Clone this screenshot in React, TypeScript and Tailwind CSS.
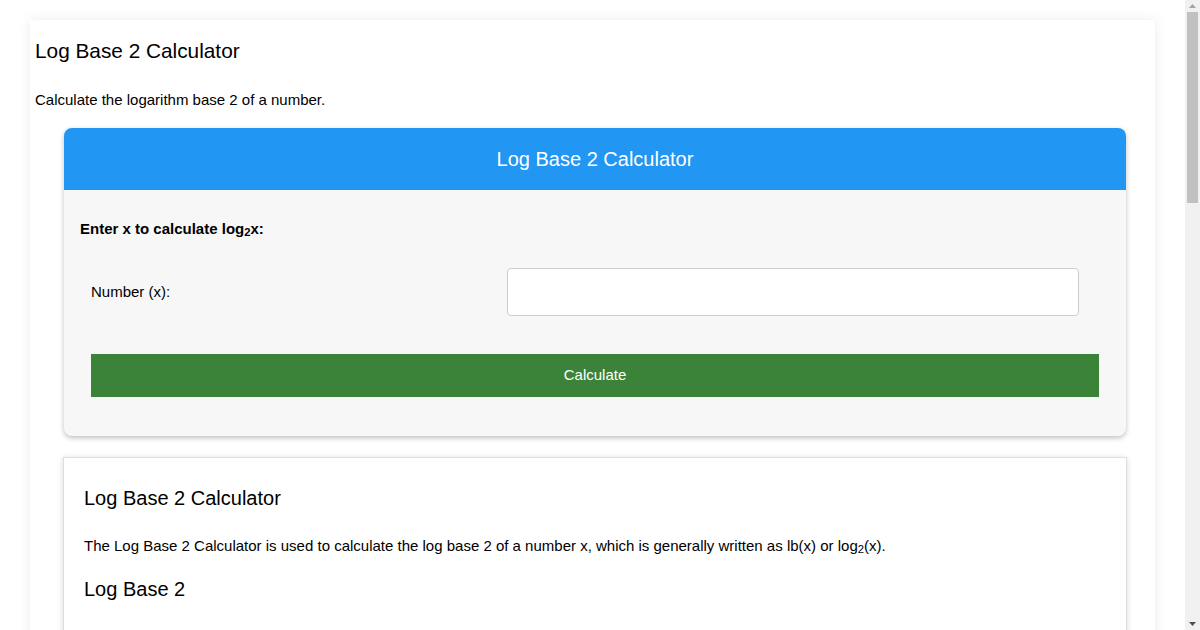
import React from "react";

function FakeScrollbar() {
  return (
    <div className="fixed top-0 right-0 w-[15px] h-screen bg-[#f1f1f1] flex flex-col items-center">
      <div className="h-[12px] w-full flex items-center justify-center">
        <svg width="7" height="4" viewBox="0 0 7 4"><path d="M0 4 L3.5 0 L7 4 Z" fill="#a3a3a3" /></svg>
      </div>
      <div className="w-[11px] h-[191px] bg-[#c1c1c1]" />
      <div className="flex-1" />
      <div className="h-[12px] w-full flex items-center justify-center">
        <svg width="7" height="4" viewBox="0 0 7 4"><path d="M0 0 L7 0 L3.5 4 Z" fill="#505050" /></svg>
      </div>
    </div>
  );
}

export default function App() {
  const font = { fontFamily: '"Liberation Sans", Arial, sans-serif' };
  return (
    <div className="bg-white text-black pt-[20px] pb-[40px] pr-[15px]" style={font}>
      <div className="mx-[30px] px-[5px] pt-[19px] pb-[30px] bg-white shadow-[0_0_12px_rgba(0,0,0,0.08)]">
        <h1 className="text-[20.8px] leading-[24px] font-normal">Log Base 2 Calculator</h1>
        <p className="mt-[27.6px] text-[15px] leading-[17px]">Calculate the logarithm base 2 of a number.</p>

        <div className="mt-[20px] ml-[29px] w-[1062px] rounded-[8px] bg-[#f7f7f7] shadow-[0_2px_5px_rgba(0,0,0,0.25)] overflow-hidden">
          <div className="h-[62px] pt-[1px] bg-[#2196f3] flex items-center justify-center text-white text-[20px] leading-[23px]">
            Log Base 2 Calculator
          </div>
          <div className="pt-[30px] pb-[39px]">
            <div className="pl-[16px] text-[15px] leading-[17px] font-bold">
              Enter x to calculate log<sub>2</sub>x:
            </div>
            <div className="mt-[31px] flex items-center h-[48px] pl-[27px]">
              <div className="w-[416px] text-[15px] leading-[17px]">Number (x):</div>
              <input
                type="text"
                className="w-[572px] h-[48px] bg-white border border-[#cccccc] rounded-[4px] outline-none px-2"
              />
            </div>
            <div className="mt-[38px] ml-[27px] w-[1008px] h-[43px] pb-[1px] bg-[#3b8339] flex items-center justify-center text-white text-[15px] leading-[17px]">
              Calculate
            </div>
          </div>
        </div>

        <div className="mt-[21px] ml-[28px] w-[1064px] border border-[#dddddd] bg-white shadow-[0_1px_6px_rgba(0,0,0,0.15)] px-[20px] pt-[29px] pb-[40px]">
          <h2 className="text-[20px] leading-[23px] font-normal">Log Base 2 Calculator</h2>
          <p className="mt-[27px] text-[15px] leading-[17px]">
            The Log Base 2 Calculator is used to calculate the log base 2 of a number x, which is generally written as lb(x) or log<sub>2</sub>(x).
          </p>
          <h2 className="mt-[24px] text-[20px] leading-[23px] font-normal">Log Base 2</h2>
          <p className="mt-[40px] text-[15px] leading-[22px]">
            Log base 2, also known as the binary logarithm, is the logarithm to the base 2. The binary logarithm of x is the power to which the number 2 must be raised to obtain the value x.
          </p>
          <p className="mt-[16px] text-[15px] leading-[22px]">
            For example, the binary logarithm of 1 is 0, the binary logarithm of 2 is 1, the binary logarithm of 4 is 2, and the binary logarithm of 32 is 5.
          </p>
          <h2 className="mt-[28px] text-[20px] leading-[23px] font-normal">Formula</h2>
          <p className="mt-[23px] text-[15px] leading-[22px]">
            log<sub>2</sub>(x) = ln(x) / ln(2) = log<sub>10</sub>(x) / log<sub>10</sub>(2)
          </p>
          <p className="mt-[16px] text-[15px] leading-[22px]">
            If 2<sup>y</sup> = x, then log<sub>2</sub>(x) = y.
          </p>
          <h2 className="mt-[28px] text-[20px] leading-[23px] font-normal">Log Base 2 Table</h2>
          <div className="mt-[20px] w-[400px] text-[15px]">
            {[
              ["x", "log2(x)"],
              ["1", "0"],
              ["2", "1"],
              ["4", "2"],
              ["8", "3"],
              ["16", "4"],
              ["32", "5"],
              ["64", "6"],
              ["128", "7"],
              ["256", "8"],
              ["512", "9"],
              ["1024", "10"],
            ].map((r, i) => (
              <div key={i} className={"flex border-b border-[#dddddd] h-[34px] items-center " + (i === 0 ? "font-bold" : "")}>
                <div className="w-[200px] pl-[8px]">{r[0]}</div>
                <div className="w-[200px] pl-[8px]">{r[1]}</div>
              </div>
            ))}
          </div>
          <h2 className="mt-[28px] text-[20px] leading-[23px] font-normal">Properties</h2>
          <p className="mt-[23px] text-[15px] leading-[22px]">
            log<sub>2</sub>(x · y) = log<sub>2</sub>(x) + log<sub>2</sub>(y)
          </p>
          <p className="mt-[16px] text-[15px] leading-[22px]">
            log<sub>2</sub>(x / y) = log<sub>2</sub>(x) − log<sub>2</sub>(y)
          </p>
          <p className="mt-[16px] text-[15px] leading-[22px]">
            log<sub>2</sub>(x<sup>y</sup>) = y · log<sub>2</sub>(x)
          </p>
          <p className="mt-[16px] text-[15px] leading-[22px]">
            The binary logarithm is frequently used in computer science and information theory, since binary numbers are the basis of digital computing.
          </p>
        </div>
      </div>
      <FakeScrollbar />
    </div>
  );
}
